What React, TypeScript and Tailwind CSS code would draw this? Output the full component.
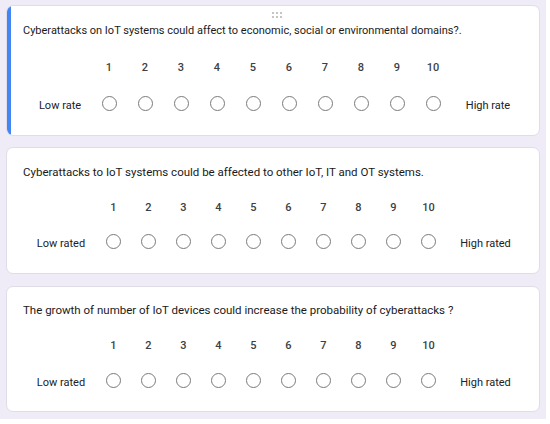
import React from "react";

type Q = {
  text: string;
  low: string;
  high: string;
  card: string;
  head: string;
  nums: string;
  row: string;
  cell: string;
  lowCls: string;
  highCls: string;
  active?: boolean;
};

const questions: Q[] = [
  {
    text: "Cyberattacks on IoT systems could affect to economic, social or environmental domains?.",
    low: "Low rate",
    high: "High rate",
    card: "h-[131px]",
    head: "pt-[17px] text-[11px]",
    nums: "mt-[23px] pl-[84px]",
    row: "mt-[19px] pl-[22px]",
    cell: "w-[36px]",
    lowCls: "w-[62px]",
    highCls: "w-[74px]",
    active: true,
  },
  {
    text: "Cyberattacks to IoT systems could be affected to other IoT, IT and OT systems.",
    low: "Low rated",
    high: "High rated",
    card: "h-[127px]",
    head: "pt-[16px] text-[11.5px]",
    nums: "mt-[22px] pl-[89px]",
    row: "mt-[17px] pl-[19px]",
    cell: "w-[35px]",
    lowCls: "w-[70px]",
    highCls: "w-[79px]",
  },
  {
    text: "The growth of number of IoT devices could increase the probability of cyberattacks ?",
    low: "Low rated",
    high: "High rated",
    card: "h-[126px]",
    head: "pt-[15px] text-[11.5px]",
    nums: "mt-[22px] pl-[89px]",
    row: "mt-[18px] pl-[19px]",
    cell: "w-[35px]",
    lowCls: "w-[70px]",
    highCls: "w-[79px]",
  },
];

const nums = [1, 2, 3, 4, 5, 6, 7, 8, 9, 10];

function Card({ q }: { q: Q }) {
  return (
    <div
      className={`relative flex flex-col bg-white rounded-[7px] border border-[#e0dde8] overflow-hidden font-['Roboto',sans-serif] ${q.card}`}
    >
      {q.active && (
        <>
          <div className="absolute left-0 top-0 bottom-0 w-[4px] bg-[#4285f4]" />
          <div className="absolute left-[265px] top-[6px] grid grid-cols-3 gap-[2px]">
            {[0, 1, 2, 3, 4, 5].map((i) => (
              <div key={i} className="w-[2px] h-[2px] bg-[#c4c4c4]" />
            ))}
          </div>
        </>
      )}
      <div className={`pl-[16px] whitespace-nowrap leading-[16px] text-[#1a1a1a] ${q.head}`}>
        {q.text}
      </div>
      <div className={`flex text-[11px] leading-[12px] font-medium text-[#3c4043] ${q.nums}`}>
        {nums.map((n) => (
          <div key={n} className={`text-center ${q.cell}`}>
            {n}
          </div>
        ))}
      </div>
      <div className={`flex items-center text-[11px] leading-[14px] text-[#202124] ${q.row}`}>
        <div className={`text-center pt-[6px] ${q.lowCls}`}>{q.low}</div>
        {nums.map((n) => (
          <div key={n} className={`flex justify-center ${q.cell}`}>
            <div className="w-[15px] h-[15px] rounded-full border-[1.5px] border-[#7a7a7a]" />
          </div>
        ))}
        <div className={`text-center pt-[6px] ${q.highCls}`}>{q.high}</div>
      </div>
    </div>
  );
}

export default function App() {
  return (
    <div className="w-[550px] h-[424px] bg-white">
      <div className="w-[546px] h-[419px] bg-[#efecf7] px-[6px] pt-[5px] flex flex-col">
        <Card q={questions[0]} />
        <div className="mt-[11px] flex flex-col gap-[12px]">
          <Card q={questions[1]} />
          <Card q={questions[2]} />
        </div>
      </div>
    </div>
  );
}
